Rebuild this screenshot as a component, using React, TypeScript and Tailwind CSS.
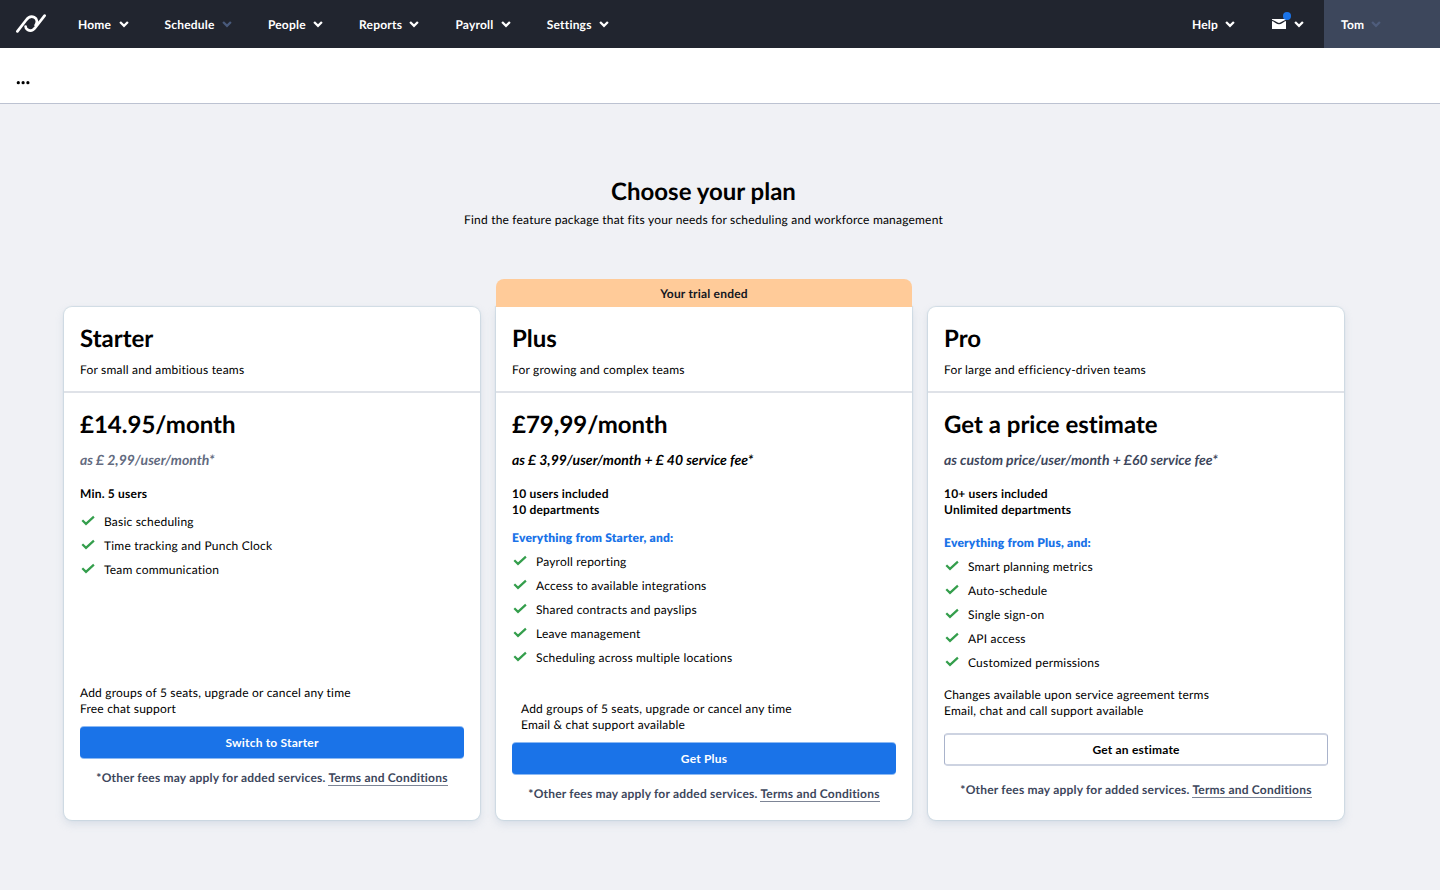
import React from "react";

type Plan = {
  name: string;
  tagline: string;
  price: string;
  detail: string;
  detailClass: string;
  limits: string[];
  inherits?: string;
  inheritsClass?: string;
  listClass: string;
  features: string[];
  notes: string[];
  notesClass: string;
  action: string;
  actionClass: string;
  feesClass: string;
  banner?: string;
};

const primary =
  "h-[31px] bg-[#1a73e8] text-white shadow-[0_-1px_0_#8cb9f3,0_1px_0_#8cb9f3]";

const plans: Plan[] = [
  {
    name: "Starter",
    tagline: "For small and ambitious teams",
    price: "£14.95/month",
    detail: "as £ 2,99/user/month*",
    detailClass: "text-[#636b80]",
    limits: ["Min. 5 users"],
    listClass: "mt-[7px]",
    features: ["Basic scheduling", "Time tracking and Punch Clock", "Team communication"],
    notes: ["Add groups of 5 seats, upgrade or cancel any time", "Free chat support"],
    notesClass: "mb-[10px]",
    action: "Switch to Starter",
    actionClass: primary,
    feesClass: "mt-[12px] mb-[34px]",
  },
  {
    name: "Plus",
    tagline: "For growing and complex teams",
    price: "£79,99/month",
    detail: "as £ 3,99/user/month + £ 40 service fee*",
    detailClass: "text-black",
    limits: ["10 users included", "10 departments"],
    inherits: "Everything from Starter, and:",
    inheritsClass: "mt-3",
    listClass: "mt-[3px]",
    features: [
      "Payroll reporting",
      "Access to available integrations",
      "Shared contracts and payslips",
      "Leave management",
      "Scheduling across multiple locations",
    ],
    notes: ["Add groups of 5 seats, upgrade or cancel any time", "Email & chat support available"],
    notesClass: "mb-[10px] ml-[9px]",
    action: "Get Plus",
    actionClass: primary,
    feesClass: "mt-[12px] mb-[18px]",
    banner: "Your trial ended",
  },
  {
    name: "Pro",
    tagline: "For large and efficiency-driven teams",
    price: "Get a price estimate",
    detail: "as custom price/user/month + £60 service fee*",
    detailClass: "text-[#3e475c]",
    limits: ["10+ users included", "Unlimited departments"],
    inherits: "Everything from Plus, and:",
    inheritsClass: "mt-[17px]",
    listClass: "mt-[3px]",
    features: [
      "Smart planning metrics",
      "Auto-schedule",
      "Single sign-on",
      "API access",
      "Customized permissions",
    ],
    notes: ["Changes available upon service agreement terms", "Email, chat and call support available"],
    notesClass: "mb-[14px]",
    action: "Get an estimate",
    actionClass: "h-[33px] border-x border-y-2 border-x-[#a9b3cb] border-y-[#cdd3e1] bg-white text-black",
    feesClass: "mt-[16px] mb-[22px]",
  },
];

const navItems = [
  { label: "Home" },
  { label: "Schedule", dim: true },
  { label: "People" },
  { label: "Reports" },
  { label: "Payroll" },
  { label: "Settings" },
];

function Chevron({ className }: { className: string }) {
  return (
    <svg width="10" height="8" viewBox="0 0 10 8" fill="none" className={className}>
      <path d="M1.1 2 5 5.8 8.9 2" stroke="currentColor" strokeWidth="2.3" />
    </svg>
  );
}

function Check() {
  return (
    <svg width="16" height="16" viewBox="0 0 16 16" fill="none" className="mr-2 shrink-0">
      <path d="M2.3 7.3 6 10.9 13.9 3.6" stroke="#349e4c" strokeWidth="2.2" />
    </svg>
  );
}

function Logo() {
  return (
    <svg width="32" height="20" viewBox="0 0 32 20" fill="none" className="ml-[15px] shrink-0">
      <path
        d="M2.4 17.4 11 6.2C13.2 3.3 16.5 2 19.2 3.3 22.3 4.8 22.6 8.4 20.6 11.2M29.6 1.6 20.6 13.2C18.4 16.2 15.2 17.2 12.6 15.8 11.3 15.1 10.6 14 10.6 12.6"
        stroke="white"
        strokeWidth="2.7"
        strokeLinecap="round"
      />
    </svg>
  );
}

function Navbar() {
  return (
    <header className="flex h-12 items-center bg-[#21252f] text-[12px] font-bold text-white">
      <Logo />
      <nav className="ml-[31px] flex gap-[36px]">
        {navItems.map((item) => (
          <a key={item.label} className="flex items-center gap-[7.3px]">
            <span className="pt-px">{item.label}</span>
            <Chevron className={item.dim ? "text-[#495a7b]" : "text-white"} />
          </a>
        ))}
      </nav>
      <a className="ml-auto flex items-center gap-[7px]">
        <span className="pt-px">Help</span>
        <Chevron className="text-white" />
      </a>
      <a className="relative ml-[37px] mr-5 flex items-center gap-2">
        <svg width="14" height="10" viewBox="0 0 14 10" fill="none">
          <path d="M0 0h14v10H0z" fill="white" />
          <path d="M0 1.4C3 2.2 4.6 4.6 7 4.6S11 2.2 14 1.4" stroke="#21252f" strokeWidth="1.3" />
        </svg>
        <span className="absolute left-[11px] -top-[7px] size-2 rounded-full bg-[#1a73e8]" />
        <Chevron className="text-white" />
      </a>
      <a className="flex h-12 w-[116px] items-center gap-[7px] bg-[#3d475c] pl-[17px]">
        <span className="pt-px">Tom</span>
        <Chevron className="text-[#4f5d7c]" />
      </a>
    </header>
  );
}

function PlanCard({ plan }: { plan: Plan }) {
  return (
    <section className="flex w-[416px] flex-col justify-end">
      {plan.banner && (
        <div className="z-10 h-7 rounded-t-lg bg-[#ffcb99] pt-px text-center font-bold leading-7 text-[#14171f]">
          {plan.banner}
        </div>
      )}
      <div
        className={`flex h-[513px] flex-col bg-white shadow-[0_0_1px_1px_rgba(190,208,218,0.6),0_4px_8px_rgba(160,180,200,0.3)] ${
          plan.banner ? "rounded-b-lg" : "rounded-lg"
        }`}
      >
        <div className="h-[86px] border-b-2 border-[#dfe2e8] px-4 pt-[16px]">
          <h2 className="text-[24px] font-bold leading-8 tracking-normal">{plan.name}</h2>
          <p className="mt-[7px]">{plan.tagline}</p>
        </div>
        <div className="flex flex-1 flex-col px-4 pt-[16px]">
          <h3 className="text-[24px] font-bold leading-8 tracking-normal">{plan.price}</h3>
          <p className={`mt-[11px] text-[14px] font-bold italic tracking-normal ${plan.detailClass}`}>
            {plan.detail}
          </p>
          <div className="mt-[18px] font-bold">
            {plan.limits.map((l) => (
              <p key={l}>{l}</p>
            ))}
          </div>
          {plan.inherits && (
            <p className={`font-extrabold text-[#1a73e8] ${plan.inheritsClass}`}>{plan.inherits}</p>
          )}
          <ul className={plan.listClass}>
            {plan.features.map((f) => (
              <li key={f} className="flex h-6 items-center">
                <Check />
                <span className="pt-0.5">{f}</span>
              </li>
            ))}
          </ul>
          <div className={`mt-auto ${plan.notesClass}`}>
            {plan.notes.map((n) => (
              <p key={n}>{n}</p>
            ))}
          </div>
          <button className={`rounded pt-px font-bold tracking-[0.2px] ${plan.actionClass}`}>
            {plan.action}
          </button>
          <p className={`text-center font-bold text-[#3d475c] ${plan.feesClass}`}>
            *Other fees may apply for added services.{" "}
            <a className="border-b border-[#7d8596]">Terms and Conditions</a>
          </p>
        </div>
      </div>
    </section>
  );
}

export default function App() {
  return (
    <div className="h-[890px] overflow-hidden bg-[#f0f1f5] font-['Lato',sans-serif] text-[12px] leading-4 tracking-[0.2px] text-black [font-variant-ligatures:none] [text-rendering:geometricPrecision]">
      <Navbar />
      <div className="flex h-14 items-center border-b border-[#bcc2d1] bg-white pl-4 pt-[13px]">
        <svg width="14" height="5" viewBox="0 0 14 5" fill="black">
          <circle cx="2.3" cy="2.7" r="1.6" />
          <circle cx="7.1" cy="2.7" r="1.6" />
          <circle cx="11.9" cy="2.7" r="1.6" />
        </svg>
      </div>
      <main className="w-[1407px] pt-[72px]">
        <h1 className="text-center text-[24px] font-bold leading-8 tracking-normal">
          Choose your plan
        </h1>
        <p className="mt-1 text-center">
          Find the feature package that fits your needs for scheduling and workforce management
        </p>
        <div className="mt-[51px] ml-16 flex gap-4">
          {plans.map((p) => (
            <PlanCard key={p.name} plan={p} />
          ))}
        </div>
      </main>
    </div>
  );
}
